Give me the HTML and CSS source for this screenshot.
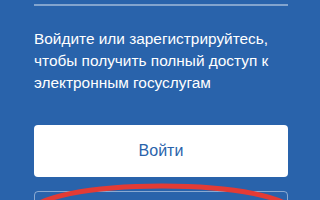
FILE: index.html
```html
<!DOCTYPE html>
<html lang="ru">
<head>
<meta charset="utf-8">
<link rel="stylesheet" href="styles.css">
</head>
<body>
<main class="panel">
  <div class="divider"></div>
  <p class="lead">Войдите или зарегистрируйтесь, чтобы получить полный доступ к электронным госуслугам</p>
  <button class="btn btn-primary">Войти</button>
  <div class="btn btn-outline" aria-label="Зарегистрироваться"></div>
  <svg class="mark" width="320" height="200" viewBox="0 0 320 200" aria-hidden="true">
    <ellipse cx="162" cy="212" rx="130" ry="26" fill="none" stroke="#e33b35" stroke-width="5"/>
  </svg>
</main>
</body>
</html>
```
FILE: styles.css
```css
html, body {
  margin: 0;
  padding: 0;
}
body {
  width: 320px;
  height: 200px;
  overflow: hidden;
  background: #2963ab;
  font-family: "Liberation Sans", Arial, sans-serif;
}
.panel {
  position: relative;
  height: 200px;
  padding: 0 32px 0 34px;
  display: flex;
  flex-direction: column;
}
.divider {
  margin-top: 4px;
  height: 2px;
  flex-shrink: 0;
  background: rgba(255, 255, 255, 0.42);
}
.lead {
  margin: 22px 0 0;
  color: #fff;
  font-size: 15.4px;
  line-height: 22px;
  flex-shrink: 0;
}
.btn {
  display: block;
  box-sizing: border-box;
  width: 100%;
  height: 52px;
  border-radius: 4px;
  font-family: inherit;
  font-size: 16px;
  flex-shrink: 0;
}
.btn-primary {
  margin-top: 31px;
  background: #fff;
  border: none;
  color: #2963ab;
}
.btn-outline {
  margin-top: 14px;
  background: transparent;
  border: 1px solid rgba(255, 255, 255, 0.45);
}
.mark {
  position: absolute;
  left: 0;
  top: 0;
  pointer-events: none;
}
```
